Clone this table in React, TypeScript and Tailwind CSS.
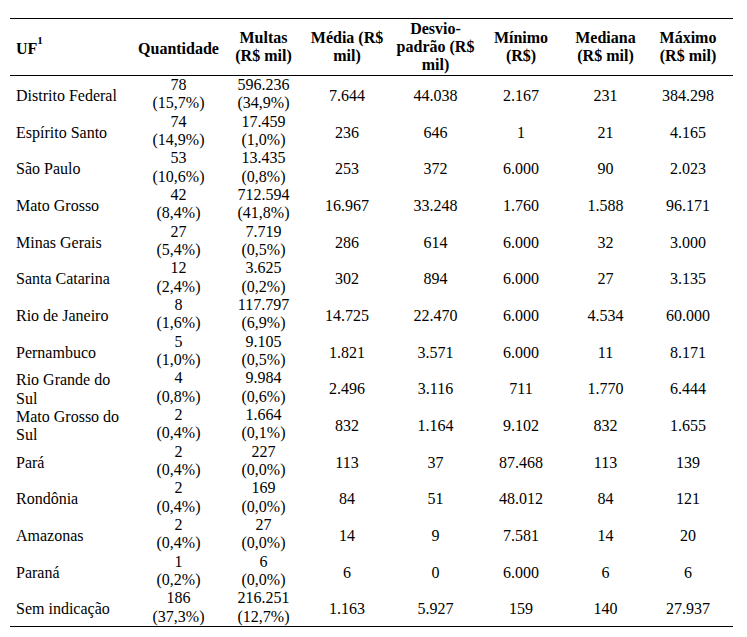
import React from 'react';

type Row = {
  uf: React.ReactNode;
  qtd: string;
  qtdPct: string;
  multas: string;
  multasPct: string;
  media: string;
  desvio: string;
  minimo: string;
  mediana: string;
  maximo: string;
};

const rows: Row[] = [
  { uf: 'Distrito Federal', qtd: '78', qtdPct: '(15,7%)', multas: '596.236', multasPct: '(34,9%)', media: '7.644', desvio: '44.038', minimo: '2.167', mediana: '231', maximo: '384.298' },
  { uf: 'Espírito Santo', qtd: '74', qtdPct: '(14,9%)', multas: '17.459', multasPct: '(1,0%)', media: '236', desvio: '646', minimo: '1', mediana: '21', maximo: '4.165' },
  { uf: 'São Paulo', qtd: '53', qtdPct: '(10,6%)', multas: '13.435', multasPct: '(0,8%)', media: '253', desvio: '372', minimo: '6.000', mediana: '90', maximo: '2.023' },
  { uf: 'Mato Grosso', qtd: '42', qtdPct: '(8,4%)', multas: '712.594', multasPct: '(41,8%)', media: '16.967', desvio: '33.248', minimo: '1.760', mediana: '1.588', maximo: '96.171' },
  { uf: 'Minas Gerais', qtd: '27', qtdPct: '(5,4%)', multas: '7.719', multasPct: '(0,5%)', media: '286', desvio: '614', minimo: '6.000', mediana: '32', maximo: '3.000' },
  { uf: 'Santa Catarina', qtd: '12', qtdPct: '(2,4%)', multas: '3.625', multasPct: '(0,2%)', media: '302', desvio: '894', minimo: '6.000', mediana: '27', maximo: '3.135' },
  { uf: 'Rio de Janeiro', qtd: '8', qtdPct: '(1,6%)', multas: '117.797', multasPct: '(6,9%)', media: '14.725', desvio: '22.470', minimo: '6.000', mediana: '4.534', maximo: '60.000' },
  { uf: 'Pernambuco', qtd: '5', qtdPct: '(1,0%)', multas: '9.105', multasPct: '(0,5%)', media: '1.821', desvio: '3.571', minimo: '6.000', mediana: '11', maximo: '8.171' },
  { uf: <>Rio Grande do<br />Sul</>, qtd: '4', qtdPct: '(0,8%)', multas: '9.984', multasPct: '(0,6%)', media: '2.496', desvio: '3.116', minimo: '711', mediana: '1.770', maximo: '6.444' },
  { uf: <>Mato Grosso do<br />Sul</>, qtd: '2', qtdPct: '(0,4%)', multas: '1.664', multasPct: '(0,1%)', media: '832', desvio: '1.164', minimo: '9.102', mediana: '832', maximo: '1.655' },
  { uf: 'Pará', qtd: '2', qtdPct: '(0,4%)', multas: '227', multasPct: '(0,0%)', media: '113', desvio: '37', minimo: '87.468', mediana: '113', maximo: '139' },
  { uf: 'Rondônia', qtd: '2', qtdPct: '(0,4%)', multas: '169', multasPct: '(0,0%)', media: '84', desvio: '51', minimo: '48.012', mediana: '84', maximo: '121' },
  { uf: 'Amazonas', qtd: '2', qtdPct: '(0,4%)', multas: '27', multasPct: '(0,0%)', media: '14', desvio: '9', minimo: '7.581', mediana: '14', maximo: '20' },
  { uf: 'Paraná', qtd: '1', qtdPct: '(0,2%)', multas: '6', multasPct: '(0,0%)', media: '6', desvio: '0', minimo: '6.000', mediana: '6', maximo: '6' },
  { uf: 'Sem indicação', qtd: '186', qtdPct: '(37,3%)', multas: '216.251', multasPct: '(12,7%)', media: '1.163', desvio: '5.927', minimo: '159', mediana: '140', maximo: '27.937' },
];

// single-line values sit a touch below the row's middle in the original
const Low = ({ children }: { children: React.ReactNode }) => (
  <span className="relative top-[2px]">{children}</span>
);

export default function App() {
  return (
    <div className="w-[747px] h-[637px] bg-white pt-[18px] pl-[10px] font-['Liberation_Serif','Times_New_Roman',serif] text-[16px] leading-[18.33px] text-black">
      <table className="w-[723px] table-fixed border-collapse">
        <colgroup>
          <col className="w-[125px]" />
          <col className="w-[87px]" />
          <col className="w-[83px]" />
          <col className="w-[84px]" />
          <col className="w-[93px]" />
          <col className="w-[78px]" />
          <col className="w-[91px]" />
          <col className="w-[82px]" />
        </colgroup>
        <thead>
          <tr className="border-t border-b border-black h-[57px] font-bold">
            <th className="text-left pl-[6px] align-middle">
              <Low>UF<sup className="text-[11px] align-[4px]">1</sup></Low>
            </th>
            <th className="text-center align-middle"><Low>Quantidade</Low></th>
            <th className="text-center align-middle">Multas<br />(R$ mil)</th>
            <th className="text-center align-middle">Média (R$<br />mil)</th>
            <th className="text-center align-middle">Desvio-<br />padrão (R$<br />mil)</th>
            <th className="text-center align-middle">Mínimo<br />(R$)</th>
            <th className="text-center align-middle">Mediana<br />(R$ mil)</th>
            <th className="text-center align-middle pr-[8px]">Máximo<br />(R$ mil)</th>
          </tr>
        </thead>
        <tbody className="border-b border-black">
          {rows.map((r, i) => (
            <tr key={i} className="h-[36.67px]">
              <td className="pl-[6px] align-middle"><Low>{r.uf}</Low></td>
              <td className="text-center align-middle">{r.qtd}<br />{r.qtdPct}</td>
              <td className="text-center align-middle">{r.multas}<br />{r.multasPct}</td>
              <td className="text-center align-middle"><Low>{r.media}</Low></td>
              <td className="text-center align-middle"><Low>{r.desvio}</Low></td>
              <td className="text-center align-middle"><Low>{r.minimo}</Low></td>
              <td className="text-center align-middle"><Low>{r.mediana}</Low></td>
              <td className="text-center align-middle pr-[8px]"><Low>{r.maximo}</Low></td>
            </tr>
          ))}
        </tbody>
      </table>
    </div>
  );
}
